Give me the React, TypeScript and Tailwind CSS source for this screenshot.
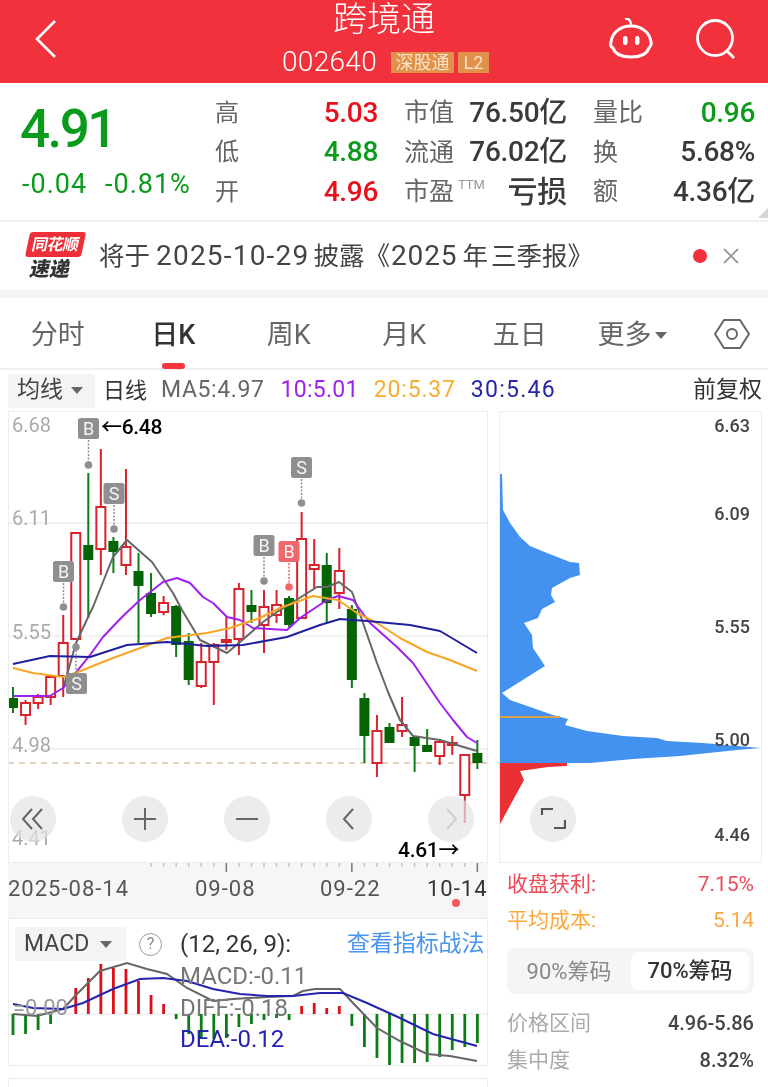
import React from 'react';

const RED = '#d8222c';
const GREEN = '#0a7d14';
const BODY = '#046404';

const cx = (i: number) => 13 + i * 12.55;

// [up, bodyTop, bodyBottom, wickTop, wickBottom]
const candles: [number, number, number, number, number][] = [
  [0, 698, 708, 687, 713],
  [1, 703, 715, 700, 725],
  [1, 697, 703, 694, 709],
  [1, 677, 697, 675, 705],
  [1, 643, 676, 615, 697],
  [1, 533, 639, 533, 639],
  [0, 545, 560, 473, 618],
  [1, 507, 549, 449, 575],
  [0, 541, 552, 537, 573],
  [1, 547, 565, 469, 575],
  [0, 571, 586, 553, 643],
  [0, 593, 614, 573, 617],
  [1, 603, 612, 596, 615],
  [0, 606, 645, 605, 657],
  [0, 641, 680, 633, 685],
  [1, 662, 686, 643, 688],
  [1, 645, 662, 643, 705],
  [1, 640, 642, 617, 650],
  [1, 589, 639, 583, 655],
  [0, 605, 612, 590, 623],
  [1, 607, 625, 590, 653],
  [1, 605, 615, 590, 623],
  [0, 598, 625, 596, 627],
  [1, 539, 618, 512, 618],
  [1, 565, 569, 539, 588],
  [0, 565, 603, 553, 623],
  [1, 571, 593, 548, 609],
  [0, 609, 680, 605, 688],
  [0, 698, 736, 693, 763],
  [1, 731, 763, 715, 777],
  [0, 727, 743, 723, 743],
  [1, 725, 731, 697, 737],
  [0, 737, 746, 737, 772],
  [0, 745, 752, 729, 752],
  [1, 742, 756, 740, 765],
  [1, 743, 745, 736, 755],
  [1, 755, 795, 755, 823],
  [0, 753, 763, 740, 769],
];

const ma5 = '63,689 76,643 90,613 93,607 113,557 127,540 152,562 173,593 182,610 200,640 227,653 240,642 263,622 277,612 317,587 327,587 339,582 352,592 362,620 377,663 388,692 400,720 413,736 440,740 477,751';
const ma10 = '13,696 50,696 63,688 78,670 90,655 103,637 122,617 140,600 163,582 177,578 190,583 203,597 213,603 227,617 240,620 253,628 287,630 300,618 327,600 338,596 353,600 370,623 397,647 413,663 440,703 453,720 467,737 477,743';
const ma20 = '13,668 33,673 63,677 78,672 113,658 143,647 167,638 207,633 230,628 260,618 280,608 302,600 313,596 338,600 357,613 377,623 400,638 427,652 450,660 477,671';
const ma30 = '13,664 50,656 90,657 127,645 167,642 207,646 243,645 287,637 320,625 340,619 367,621 410,625 440,631 477,653';

// bar end per candle, 1013 is the zero line
const macdBars = [1034, 1033, 1029, 1023, 1013, 987, 977, 963, 967, 968, 980, 994, 1003, 1018, 1033, 1038, 1038, 1037, 1026, 1023, 1019, 1017, 1019, 1005, 1002, 1007, 1005, 1025, 1046, 1057, 1064, 1062, 1062, 1061, 1056, 1049, 1046, 1042];
const diffLine = '13,1013 37,1015 63,1008 77,993 100,970 127,962 147,968 167,973 187,987 213,1000 233,998 267,996 293,995 303,990 315,988 340,988 353,1002 377,1027 400,1040 427,1053 450,1055 477,1060';
const deaLine = '13,1003 33,1007 63,1008 83,1002 113,988 140,978 163,977 187,980 213,988 240,993 267,995 293,995 320,992 343,992 367,1002 400,1017 433,1033 477,1045';

const chipBlue = '500,474 502,474 503,510 510,523 520,537 530,546 547,553 570,562 579,563 580,575 570,578 552,588 551,595 555,602 542,609 538,618 524,623 532,635 533,648 545,666 502,693 510,700 553,715 568,719 565,725 587,731 623,736 657,738 667,741 703,743 762,748 737,750 680,756 633,759 590,763 500,763';
const chipRed = '500,763 567,763 567,766 548,767 520,771 524,780 500,824';

const markers = [
  { x: 88.5, top: 418, dot: 465, label: 'B', color: '#8f8f8f' },
  { x: 114, top: 483, dot: 529, label: 'S', color: '#8f8f8f' },
  { x: 63.5, top: 561, dot: 607, label: 'B', color: '#8f8f8f' },
  { x: 264, top: 535, dot: 581, label: 'B', color: '#8f8f8f' },
  { x: 289, top: 541, dot: 587, label: 'B', color: '#f0686c' },
  { x: 301.5, top: 457, dot: 503, label: 'S', color: '#8f8f8f' },
];

const stats = [
  ['高', '5.03', 'text-[#e8101c]', '市值', '76.50亿', '量比', '0.96', 'text-[#0a9b1c]'],
  ['低', '4.88', 'text-[#0a9b1c]', '流通', '76.02亿', '换', '5.68%', 'text-[#3a3a3a]'],
  ['开', '4.96', 'text-[#e8101c]', '市盈', '亏损', '额', '4.36亿', 'text-[#3a3a3a]'],
];

const tabs = ['分时', '日K', '周K', '月K', '五日'];

const StockHeader = () => (
  <div className="relative h-[83px] shrink-0 bg-[#f1323c] text-white">
    <svg className="absolute left-[34px] top-[19px]" width="24" height="40" viewBox="0 0 24 40" fill="none" stroke="white" strokeWidth="2.6">
      <path d="M21 2 3 20l18 18" />
    </svg>
    <div className="flex flex-col items-center">
      <div className="h-[42px] text-[34px] leading-[38px] font-light">跨境通</div>
      <div className="flex items-center h-[24px] mt-[8px] ml-[3px]">
        <span className="text-[28px] font-light tracking-[0.3px]">002640</span>
        <span className="ml-[14px] w-[63px] bg-[#e0914a] text-center text-[18px] leading-[21px] text-[#fbe3c8]">深股通</span>
        <span className="ml-[4px] w-[31px] bg-[#e0914a] text-center text-[18px] leading-[21px] text-[#fbe3c8]">L2</span>
      </div>
    </div>
    <svg className="absolute left-[608px] top-[18px]" width="46" height="42" viewBox="0 0 46 42" fill="none" stroke="white" strokeWidth="3">
      <path d="M17 1c3-1 6 1 6 6" strokeWidth="2.4" />
      <path d="M23 8c11 0 19 7 20 16 1 3-1 5-2 6-2 6-9 9-18 9S7 36 5 30c-2-1-3-3-2-6C4 15 12 8 23 8Z" />
      <rect x="15" y="18" width="4.5" height="9" rx="2.2" fill="white" stroke="none" />
      <rect x="27" y="18" width="4.5" height="9" rx="2.2" fill="white" stroke="none" />
    </svg>
    <svg className="absolute left-[695px] top-[19px]" width="42" height="42" viewBox="0 0 42 42" fill="none" stroke="white" strokeWidth="2.8">
      <circle cx="20" cy="19" r="17.5" />
      <path d="m31 31 8 8" />
    </svg>
  </div>
);

const Quote = () => (
  <div className="flex h-[139px] shrink-0 border-b-2 border-[#f0f0f0] bg-white relative">
    <div className="w-[215px] pl-[20px] pt-[13px] text-[#0a9b1c]">
      <div className="text-[53px] leading-[66px] tracking-[-2.6px] font-medium">4.91</div>
      <div className="flex mt-[6px] ml-[2px] text-[27px] leading-[32px] tracking-[1px]">
        <span className="w-[83px]">-0.04</span>
        <span>-0.81%</span>
      </div>
    </div>
    <div className="flex-1 pt-[10px]">
      {stats.map((r, i) => (
        <div key={r[0]} className="flex items-center h-[39.5px]">
          <span className="w-[50px] text-[24px] text-[#666]">{r[0]}</span>
          <span className={`w-[113px] text-right text-[28px] font-medium tracking-[-0.3px] ${r[2]}`}>{r[1]}</span>
          <span className="ml-[26px] w-[60px] text-[25px] text-[#666] relative">
            {r[3]}
            {i === 2 && <sup className="absolute left-[54px] top-[12px] text-[13px] text-[#999]">TTM</sup>}
          </span>
          <span className={`w-[103px] text-right font-medium text-[#3a3a3a] tracking-[-0.3px] ${i === 2 ? 'text-[30px]' : 'text-[28px]'}`}>{r[4]}</span>
          <span className="ml-[26px] w-[60px] text-[25px] text-[#666]">{r[5]}</span>
          <span className={`w-[102px] text-right text-[28px] font-medium tracking-[-0.3px] ${r[7]}`}>{r[6]}</span>
        </div>
      ))}
    </div>
    <div className="absolute right-0 bottom-[2px] w-0 h-0 border-l-[10px] border-l-transparent border-b-[10px] border-b-[#d5d5d5]" />
  </div>
);

const Banner = () => (
  <div className="flex items-center h-[68px] shrink-0 bg-white border-b-[8px] border-[#f5f5f5] box-content">
    <div className="ml-[25px] w-[56px] flex flex-col items-center -skew-x-12">
      <div className="relative w-[56px] h-[25px] rounded-[3px] bg-[#ee2f37] text-center text-[16px] leading-[25px] font-bold text-white tracking-[-0.5px]">
        同花顺
      </div>
      <div className="text-[20px] leading-[24px] font-black text-[#333]">速递</div>
    </div>
    <div className="ml-[18px] flex items-baseline text-[25.5px] text-[#444] whitespace-nowrap">
      将于
      <span className="ml-[6px] mr-[4px] text-[28px] tracking-[1.2px]">2025-10-29</span>
      披露《
      <span className="ml-[1px] mr-[5px] text-[28px] tracking-[0.9px]">2025</span>
      年
      <span className="ml-[3px]">三季报》</span>
    </div>
    <div className="ml-auto mr-[61px] w-[14px] h-[14px] rounded-full bg-[#f0303a]" />
    <svg className="absolute left-[723px]" width="16" height="16" viewBox="0 0 16 16" stroke="#999" strokeWidth="1.8">
      <path d="m1 1 14 14M15 1 1 15" />
    </svg>
  </div>
);

const Tabs = () => (
  <div className="relative flex items-center h-[72px] shrink-0 bg-white border-b-2 border-[#f0f0f0] text-[27px] text-[#666]">
    <div className="flex w-[690px] pt-[4px]">
      {tabs.map((t, i) => (
        <div key={t} className={`w-[115.5px] text-center ${i === 1 ? 'font-medium text-[#333]' : ''}`}>{t}</div>
      ))}
      <div className="flex items-center ml-[20px] whitespace-nowrap">
        更多
        <span className="ml-[3px] w-0 h-0 border-x-[6px] border-x-transparent border-t-[7px] border-t-[#666]" />
      </div>
    </div>
    <svg className="absolute left-[714px] top-[20px]" width="36" height="32" viewBox="0 0 36 32" fill="none" stroke="#666" strokeWidth="2">
      <path d="M10 2h16l9 14-9 14H10L1 16Z" strokeLinejoin="round" />
      <circle cx="18" cy="16" r="5" />
    </svg>
    <div className="absolute left-[162px] bottom-[-1px] w-[23px] h-[6px] rounded-full bg-[#f5343e]" />
  </div>
);

const MaRow = () => (
  <div className="flex items-center h-[41px] shrink-0 bg-white whitespace-nowrap text-[23px]">
    <div className="flex items-center ml-[8px] w-[87px] h-[34px] pl-[9px] rounded-[3px] bg-[#f4f4f4] text-[#444]">
      均线
      <span className="ml-[8px] w-0 h-0 border-x-[6px] border-x-transparent border-t-[7px] border-t-[#666]" />
    </div>
    <span className="ml-[8px] text-[22px] text-[#333]">日线</span>
    <span className="ml-[14px] text-[#666] tracking-[0.6px]">MA5:4.97</span>
    <span className="ml-[16px] text-[#a020f0] tracking-[0.3px]">10:5.01</span>
    <span className="ml-[15px] text-[#f8ac30] tracking-[0.8px]">20:5.37</span>
    <span className="ml-[15px] text-[#2525a8] tracking-[1.3px]">30:5.46</span>
    <span className="ml-auto mr-[6px] text-[#333]">前复权</span>
  </div>
);

const CandlePanel = () => (
  <div className="relative h-[452px] border border-[#eeeeee] bg-white overflow-hidden">
    <svg className="absolute left-[-1px] top-[-1px]" width="480" height="452" viewBox="8 411 480 452">
      {[523, 636, 749].map((y) => (
        <line key={y} x1="8" x2="488" y1={y} y2={y} stroke="#eeeeee" strokeWidth="1.5" />
      ))}
      <line x1="8" x2="488" y1="763" y2="763" stroke="#dcc4a4" strokeWidth="1.3" strokeDasharray="6 5" />
      {candles.map((c, i) => {
        const x = cx(i);
        const up = c[0] === 1;
        return (
          <g key={i}>
            <line x1={x} x2={x} y1={c[3]} y2={c[4]} stroke={up ? RED : GREEN} strokeWidth="2" />
            {up ? (
              <rect x={x - 4.5} y={c[1]} width="9" height={Math.max(c[2] - c[1], 2)} fill="white" stroke={RED} strokeWidth="2" />
            ) : (
              <rect x={x - 5} y={c[1]} width="10" height={c[2] - c[1]} fill={BODY} />
            )}
          </g>
        );
      })}
      <polyline points={ma5} fill="none" stroke="#666666" strokeWidth="2" strokeLinejoin="round" />
      <polyline points={ma10} fill="none" stroke="#a020f0" strokeWidth="2" strokeLinejoin="round" />
      <polyline points={ma20} fill="none" stroke="#f5a623" strokeWidth="2" strokeLinejoin="round" />
      <polyline points={ma30} fill="none" stroke="#2020a0" strokeWidth="2" strokeLinejoin="round" />
      {markers.map((m, i) => (
        <g key={i}>
          <line x1={m.x} x2={m.x} y1={m.top + 22} y2={m.dot} stroke={m.color} strokeWidth="1.5" strokeDasharray="2 1.5" />
          <circle cx={m.x} cy={m.dot} r="3.8" fill={m.color} />
          <rect x={m.x - 10.5} y={m.top} width="21" height="21" rx="2.5" fill={m.color} />
          <text x={m.x} y={m.top + 17} textAnchor="middle" fontSize="18" fill="#f4f4f4" fontFamily="Roboto">{m.label}</text>
        </g>
      ))}
      <line x1="76" x2="76" y1="650" y2="673" stroke="#8f8f8f" strokeWidth="1.5" strokeDasharray="2 1.5" />
      <circle cx="76" cy="647" r="3.8" fill="#8f8f8f" />
      <rect x="66" y="673" width="21" height="21" rx="2.5" fill="#8f8f8f" />
      <text x="76.5" y="690" textAnchor="middle" fontSize="18" fill="#f4f4f4" fontFamily="Roboto">S</text>
    </svg>

    {[['6.68', 1], ['6.11', 94], ['5.55', 208], ['4.98', 321], ['4.41', 414]].map(([v, t]) => (
      <span key={v} className="absolute left-[3px] text-[20px] leading-[24px] text-[#aaaaaa]" style={{ top: t as number }}>{v}</span>
    ))}
    <span className="absolute left-[92px] top-[3px] text-[21px] leading-[24px] font-medium text-black tracking-[-0.3px]">←6.48</span>
    <span className="absolute left-[389px] top-[426px] text-[21px] leading-[24px] font-medium text-black tracking-[-0.3px]">4.61→</span>

    {[1, 113, 215, 317, 419].map((left, n) => (
      <div key={n} className="absolute top-[384px] w-[46px] h-[46px] rounded-full bg-[#e4e4e4]/70 flex items-center justify-center" style={{ left }}>
        <svg width="24" height="24" viewBox="0 0 24 24" fill="none" stroke={n === 4 ? '#cfcfcf' : '#666'} strokeWidth="2">
          {n === 0 && <path d="M11 2 2 12l9 10M21 2l-9 10 9 10" />}
          {n === 1 && <path d="M12 1v22M1 12h22" />}
          {n === 2 && <path d="M1 12h22" />}
          {n === 3 && <path d="M16 2 7 12l9 10" />}
          {n === 4 && <path d="m8 2 9 10-9 10" />}
        </svg>
      </div>
    ))}
  </div>
);

const DateAxis = () => (
  <div className="relative h-[55px] bg-[#f6f6f6] text-[22px] text-[#555] tracking-[1px]">
    <svg className="absolute left-0 top-0" width="480" height="10" viewBox="8 862 480 10">
      {candles.map((_, i) => {
        if (i < 11) return null;
        const major = i === 17 || i === 27 || i === 37;
        return <line key={i} x1={cx(i)} x2={cx(i)} y1="862" y2={major ? 871 : 866} stroke={major ? '#777' : '#c4c4c4'} strokeWidth="1.5" />;
      })}
    </svg>
    <div className="flex pt-[9px]">
      <span className="w-[187px]">2025-08-14</span>
      <span className="w-[125px]">09-08</span>
      <span className="w-[107px]">09-22</span>
      <span className="text-[#333]">10-14</span>
    </div>
    <div className="absolute left-[444px] top-[36px] w-[8px] h-[8px] rounded-full bg-[#f4575c]" />
  </div>
);

const MacdPanel = () => (
  <div className="relative h-[148px] border border-[#eeeeee] bg-white overflow-hidden">
    <svg className="absolute left-[-1px] top-[-1px]" width="480" height="148" viewBox="8 917 480 148">
      <line x1="8" x2="488" y1="1013" y2="1013" stroke="#eeeeee" strokeWidth="1.5" />
      {macdBars.map((y, i) => (
        <line key={i} x1={cx(i)} x2={cx(i)} y1="1013" y2={y} stroke={y < 1013 ? '#dd0f16' : '#0a7d14'} strokeWidth="2.8" />
      ))}
      <polyline points={diffLine} fill="none" stroke="#666666" strokeWidth="2" />
      <polyline points={deaLine} fill="none" stroke="#2424b0" strokeWidth="2" />
    </svg>

    <div className="relative flex items-center h-[42px] pt-[8px] whitespace-nowrap">
      <div className="flex items-center ml-[6px] w-[111px] h-[34px] pl-[9px] rounded-[3px] bg-[#f4f4f4] text-[23px] text-[#444]">
        MACD
        <span className="ml-[11px] w-0 h-0 border-x-[6px] border-x-transparent border-t-[7px] border-t-[#666]" />
      </div>
      <div className="ml-[13px] flex items-center justify-center w-[23px] h-[23px] rounded-full border border-[#999] text-[16px] text-[#888]">?</div>
      <span className="ml-[18px] text-[24px] text-[#333]">(12, 26, 9):</span>
      <span className="absolute left-[338px] top-[9px] text-[23px] leading-[32px] text-[#4a96ee] tracking-[-0.1px]">查看指标战法</span>
    </div>
    <div className="absolute left-[171px] top-[42px] flex flex-col text-[24px] leading-[31.5px]">
      <span className="text-[#777]">MACD:-0.11</span>
      <span className="text-[#777]">DIFF:-0.18</span>
      <span className="text-[#2424b0]">DEA:-0.12</span>
    </div>
    <span className="absolute left-[4px] top-[77px] text-[22px] leading-[24px] text-[#999]">=0.00</span>
  </div>
);

const ChipPanel = () => (
  <div className="relative h-[452px] border border-[#eeeeee] bg-white overflow-hidden">
    <svg className="absolute left-[-1px] top-[-1px]" width="263" height="452" viewBox="499 411 263 452">
      <polygon points={chipBlue} fill="#4492ef" />
      <polygon points={chipRed} fill="#ea3034" />
      <line x1="500" x2="560" y1="717" y2="717" stroke="#dba24c" strokeWidth="2" />
    </svg>
    {[['6.63', 2], ['6.09', 90], ['5.55', 203], ['5.00', 316], ['4.46', 411]].map(([v, t]) => (
      <span key={v} className="absolute right-[11px] text-[18px] leading-[24px] font-medium text-[#444]" style={{ top: t as number }}>{v}</span>
    ))}
    <div className="absolute left-[30px] top-[384px] w-[46px] h-[46px] rounded-full bg-[#ececec] flex items-center justify-center">
      <svg width="26" height="26" viewBox="0 0 26 26" fill="none" stroke="#555" strokeWidth="2.2">
        <path d="M2 9V3h11M25 14v8H14" />
      </svg>
    </div>
  </div>
);

const ChipStats = () => (
  <div className="px-[8px] pt-[7px] text-[21px]">
    <div className="flex justify-between h-[36px] leading-[28px] text-[#ee4a58]"><span>收盘获利:</span><span>7.15%</span></div>
    <div className="flex justify-between h-[34px] leading-[28px] text-[#fba93e]"><span>平均成本:</span><span>5.14</span></div>
    <div className="flex items-center h-[46px] mt-[8px] rounded-[8px] bg-[#f5f5f5] pr-[5px] text-[22px]">
      <div className="w-[124px] text-center text-[#888]">90%筹码</div>
      <div className="flex-1 h-[38px] leading-[38px] rounded-[7px] bg-white text-center font-medium text-[#333]">70%筹码</div>
    </div>
    <div className="flex justify-between mt-[15px] h-[37px] leading-[28px]"><span className="text-[#aaaaaa]">价格区间</span><span className="text-[#444] text-[20px] font-medium">4.96-5.86</span></div>
    <div className="flex justify-between leading-[28px]"><span className="text-[#aaaaaa]">集中度</span><span className="text-[#444] text-[20px] font-medium">8.32%</span></div>
  </div>
);

export default function App() {
  return (
    <div className="relative flex flex-col w-[768px] h-[1087px] overflow-hidden bg-white blur-[0.4px] [font-family:Roboto,'Noto_Sans_CJK_SC',sans-serif]">
      <StockHeader />
      <Quote />
      <Banner />
      <Tabs />
      <MaRow />
      <div className="flex flex-1">
        <div className="ml-[8px] w-[480px]">
          <CandlePanel />
          <DateAxis />
          <MacdPanel />
          <div className="mt-[12px] h-[20px] border border-[#eeeeee]" />
        </div>
        <div className="ml-[11px] w-[263px]">
          <ChipPanel />
          <ChipStats />
        </div>
      </div>
    </div>
  );
}
